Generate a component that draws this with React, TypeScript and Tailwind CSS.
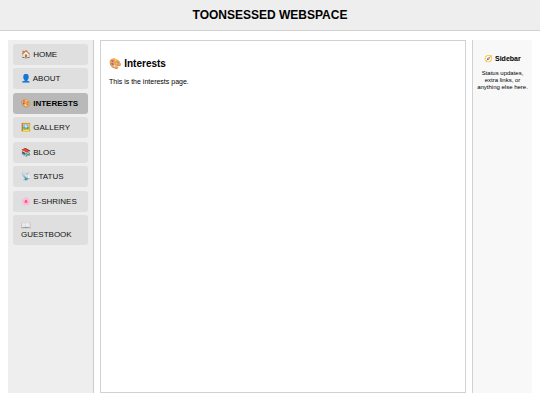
import React, { useState } from 'react';

const navItems = [
    { id: 'home', icon: '🏠', label: 'HOME' },
    { id: 'about', icon: '👤', label: 'ABOUT' },
    { id: 'interests', icon: '🎨', label: 'INTERESTS' },
    { id: 'gallery', icon: '🖼️', label: 'GALLERY' },
    { id: 'blog', icon: '📚', label: 'BLOG' },
    { id: 'status', icon: '📡', label: 'STATUS' },
    { id: 'e-shrines', icon: '🌸', label: 'E-SHRINES' },
    { id: 'guestbook', icon: '📖', label: 'GUESTBOOK' }
];

const Navigation: React.FC = () => {
    const [active, setActive] = useState('interests');

    const linkClasses = "block rounded-[3px] px-2 py-[6px] text-[8px] leading-[9px]";

    return (
        <nav className="w-[86px] shrink-0 border-r border-[#cccccc] bg-[#eeeeee] px-[5px] pt-1">
            <ul className="flex h-[201px] flex-col justify-between">
                {navItems.map(item => (
                    <li key={item.id}>
                        <a
                            href={`#${item.id}`}
                            onClick={() => setActive(item.id)}
                            className={`${linkClasses} ${item.id === active ? 'bg-[#b9b9b9] font-bold text-black' : 'bg-[#dfdfdf] text-[#111111]'}`}
                        >
                            {item.icon} {item.label}
                        </a>
                    </li>
                ))}
            </ul>
        </nav>
    );
};

export default function App() {
    return (
        <div className="flex min-h-screen flex-col bg-white font-['Liberation_Sans',Arial,'Noto_Color_Emoji',sans-serif] text-black">
            <header className="border-b border-[#d2d2d2] bg-[#eeeeee] py-2 text-center">
                <h1 className="text-[12px] leading-[14px] font-bold">TOONSESSED WEBSPACE</h1>
            </header>

            <div className="flex flex-1 gap-[6px] px-2 pt-[9px] pb-3">
                <Navigation />

                <main className="flex-1 border border-[#d2d2d2] bg-white px-2 pt-4">
                    <h2 className="text-[10px] leading-[14px] font-bold">🎨 Interests</h2>
                    <p className="mt-[6px] text-[7px] leading-[9px]">This is the interests page.</p>
                </main>

                <aside className="w-[60px] shrink-0 border-l border-[#d2d2d2] bg-[#f8f8f8] px-1 pt-[14px] text-center">
                    <h3 className="text-[7px] leading-[9px] font-bold">🧭 Sidebar</h3>
                    <p className="mt-[7px] text-[6px] leading-[7px]">Status updates, extra links, or anything else here.</p>
                </aside>
            </div>
        </div>
    );
}
